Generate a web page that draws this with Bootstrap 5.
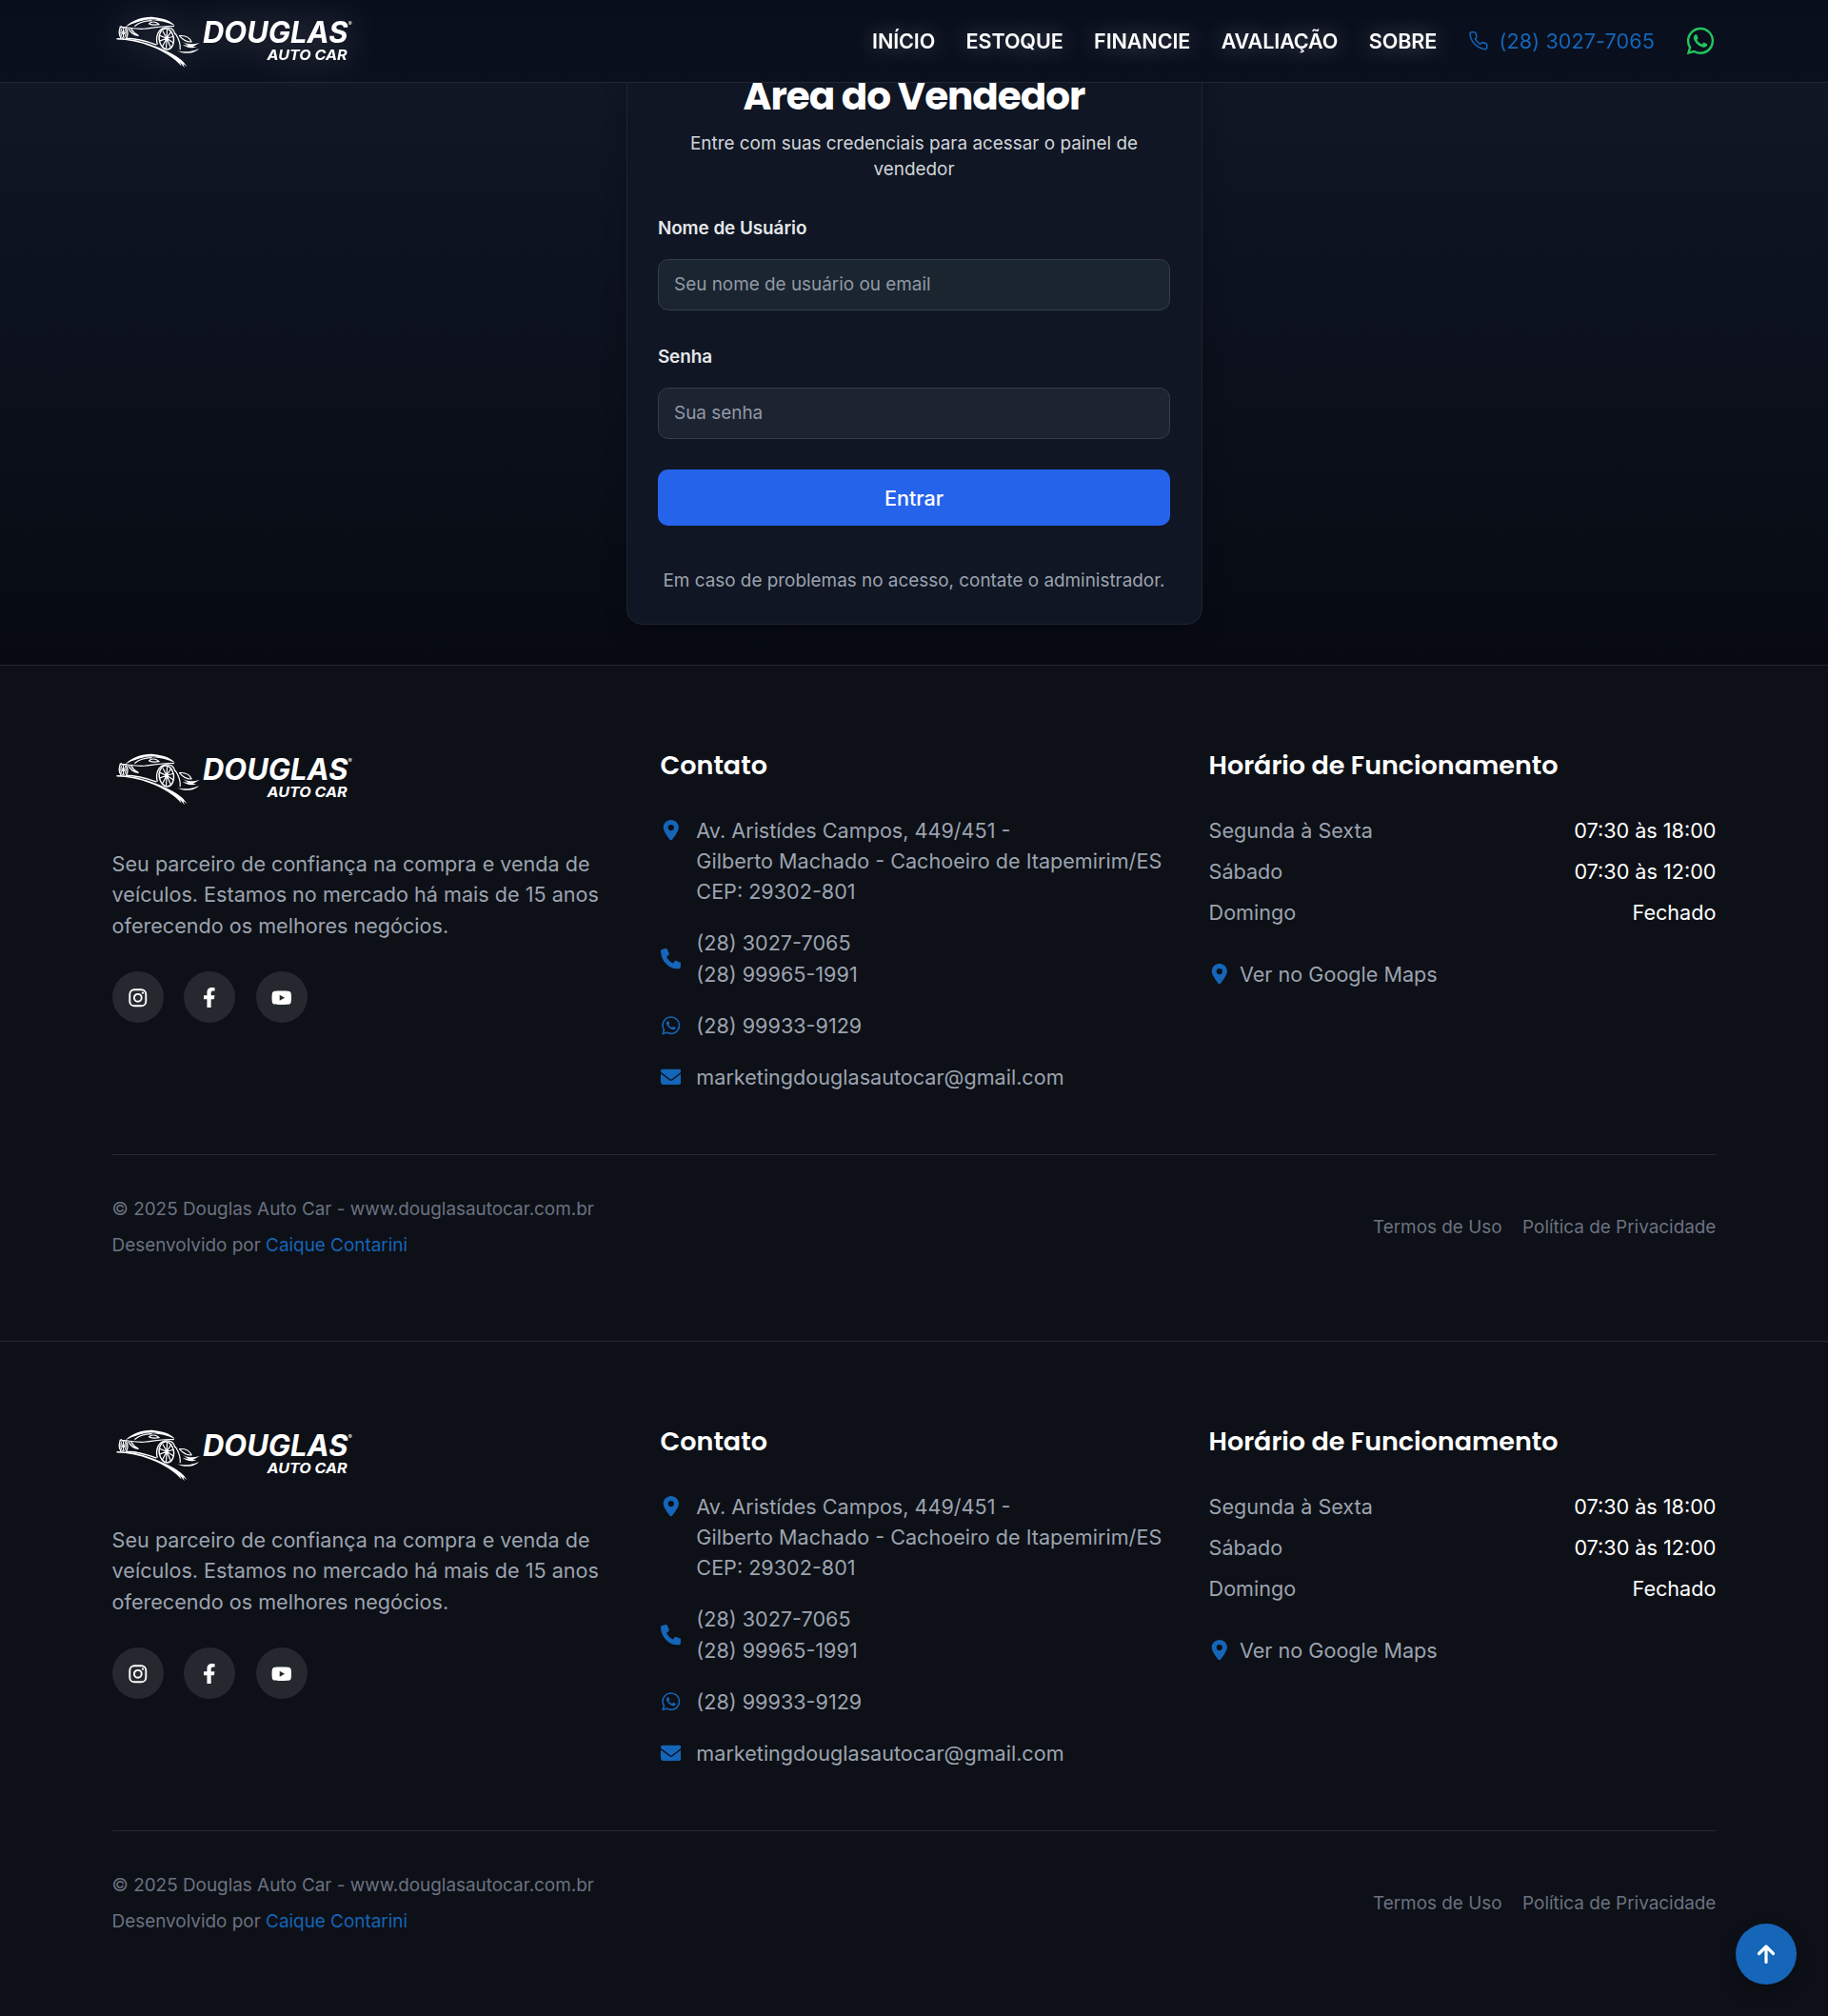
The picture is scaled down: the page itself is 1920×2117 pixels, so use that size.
<!DOCTYPE html>
<html lang="pt-BR">
<head>
<meta charset="utf-8">
<meta name="viewport" content="width=device-width, initial-scale=1">
<title>Douglas Auto Car - Área do Vendedor</title>
<link href="https://cdn.jsdelivr.net/npm/bootstrap@5.3.0/dist/css/bootstrap.min.css" rel="stylesheet">
<style>
html{font-size:21.6px}
body{font-family:Inter,sans-serif;background:#0d1017;color:#fff;line-height:1.5;overflow-x:hidden}
a{text-decoration:none}
svg{display:block;flex:none}
.wrap{width:78rem;margin:0 auto}
.topbar{height:87px;background:linear-gradient(180deg,#080e1c,#0a101d);border-bottom:1px solid #202632;z-index:10}
.logo-svg{width:12.25rem;height:3rem;overflow:visible}
.logo-svg text{fill:#fff;font-family:Inter,sans-serif;font-style:italic;font-weight:700}
.logo-glow{filter:drop-shadow(0 0 .9rem rgba(255,255,255,.25))}
.menu{gap:1.5rem}
.menu a{color:#fff;font-weight:600;letter-spacing:-.0055em;text-shadow:0 0 1.2rem rgba(255,255,255,.4)}
.menu .tel{color:#1565b8;font-weight:400;letter-spacing:.004em;text-shadow:none;gap:.53rem}
.menu .zap{color:#22c55e}
.ic{width:1rem;height:1rem}
.hero{margin-top:87px;height:611px;padding-bottom:42px;background:linear-gradient(180deg,#101725 0,#0d1321 25%,#0b101b 55%,#070a11 100%)}
.login{width:605px;background:#101623;border:1px solid #1a2533;border-radius:.75rem;padding:1.5rem;box-shadow:0 .3rem 1.2rem rgba(0,0,0,.2)}
.login h1{font-family:Poppins,Inter,sans-serif;font-weight:700;font-size:1.875rem;line-height:2.25rem;letter-spacing:-.025em}
.sub{font-size:.875rem;line-height:1.25rem;color:#d1d5db}
.login label{font-size:.875rem;line-height:1.25rem;font-weight:600;letter-spacing:-.003em;color:#e5e7eb;margin:1.65rem 0 .85rem}
.login .form-control{height:2.5rem;background:#1c2432;border:1px solid #343e4b;border-radius:.5rem;font-size:.875rem;padding:0 .75rem}
.login .form-control.user{background:#1a2530}
.login .form-control::placeholder{color:#9299a6}
.enter{height:2.75rem;background:#2563eb;border-radius:.5rem;color:#fff;font-weight:500}
.help{margin-top:2rem;color:#9ca3af}
.foot{border-top:1px solid #24282f;height:710px;padding-top:4rem}
.cols{display:grid;grid-template-columns:repeat(3,1fr);gap:2rem;height:19.75rem}
.foot h2{font-family:Poppins,Inter,sans-serif;font-weight:600;font-size:1.25rem;line-height:1.75rem;margin-bottom:1.5rem}
.foot .logo-svg{margin-bottom:1.88rem}
.tx{color:#9ca3af}
.item{gap:.75rem}
.soc{width:2.5rem;height:2.5rem;border-radius:50%;background:#25282e}
.blue{color:#1565b8}
.legal{border-top:1px solid #24282f;padding-top:2rem;font-size:.875rem;line-height:1.25rem;color:#6b7280}
.totop{position:fixed;right:33px;bottom:33px;width:64px;height:64px;border-radius:50%;background:#1565b8;box-shadow:0 .4rem .8rem rgba(0,0,0,.25)}
</style>
<script src="https://cdn.jsdelivr.net/npm/bootstrap@5.3.0/dist/js/bootstrap.bundle.min.js"></script>
</head>
<body>
<svg width="0" height="0" class="position-absolute">
<symbol id="car" viewBox="0 0 264.600 64.800" overflow="visible">
  <g transform="translate(-7.500 -5.400) scale(.3333)" fill="none" stroke="#fff" stroke-linecap="round" stroke-linejoin="round">
    <path fill="#fff" stroke="none" d="M64 68C85 46 120 35 152 37C185 40 208 50 220 64C195 53 172 48 146 47C112 47 90 55 64 68z"/>
    <path fill="#101623" stroke="none" d="M86 62C108 47 135 42 165 46C140 48 112 52 95 65z"/>
    <path stroke-width="3.500" d="M94 65C106 54 122 49 146 48M138 58C144 50 160 50 170 60C160 62 148 62 138 58M46 68C70 68 92 76 122 74C150 72 172 64 216 66"/>
    <path stroke-width="4" d="M74 74C78 84 90 94 104 95C92 88 86 82 82 74M164 122C158 96 168 74 190 70C208 68 217 78 220 90"/>
    <path stroke-width="4" d="M66 104C90 104 128 112 160 124M66 70C72 82 72 94 66 104M50 66C42 76 42 92 50 104"/>
    <ellipse cx="57" cy="86" rx="8" ry="17" stroke-width="3" stroke-dasharray="3 2"/>
    <path stroke-width="3" d="M57 72v28M50 78l14 16M64 78L50 94M49 86h16"/>
    <ellipse cx="193" cy="106" rx="23" ry="33" transform="rotate(-8 193 106)" stroke-width="4.500"/>
    <path stroke-width="3.600" d="M195 78L194 104L208 82M194 104L215 98M194 104L215 118M194 104L206 132M194 104L192 137M194 104L180 130M194 104L173 112M194 104L174 96M194 104L182 82"/>
    <path stroke-width="3.500" d="M222 90C232 106 238 122 236 138M234 96C252 94 266 102 272 115C258 116 244 108 234 96"/>
    <path fill="#fff" stroke="none" d="M36 103C94 104 142 120 190 142C224 158 248 174 258 194L246 184L250 197L236 180L240 192C218 166 184 145 142 129C108 116 74 109 36 108zM240 112C256 124 274 124 298 118C288 124 280 127 276 130L288 130C270 138 256 132 244 124L262 127zM226 142C250 150 272 146 296 136C284 150 252 158 226 142z"/>
  </g>
</symbol>
<symbol id="pin" viewBox="0 0 384 512"><path fill="currentColor" fill-rule="evenodd" d="M215.700 499.200C267 435 384 279.400 384 192C384 86 298 0 192 0S0 86 0 192c0 87.400 117 243 168.300 307.200c12.300 15.300 35.100 15.300 47.400 0zM192 118a74 74 0 1 1 0 148 74 74 0 1 1 0-148z"/></symbol>
<symbol id="phone" viewBox="0 0 512 512"><path fill="currentColor" d="M164.900 24.600c-7.700-18.600-28-28.500-47.400-23.200l-88 24C12.100 30.200 0 46 0 64C0 311.400 200.600 512 448 512c18 0 33.800-12.100 38.600-29.500l24-88c5.300-19.400-4.600-39.700-23.200-47.400l-96-40c-16.300-6.800-35.200-2.100-46.300 11.600L304.700 368C234.300 334.700 177.300 277.700 144 207.300L193.300 167c13.700-11.200 18.400-30 11.600-46.300l-40-96z"/></symbol>
<symbol id="mail" viewBox="0 0 512 512"><path fill="currentColor" d="M48 64C21.500 64 0 85.500 0 112c0 15.100 7.100 29.300 19.200 38.400L236.800 313.600c11.400 8.500 27 8.500 38.400 0L492.800 150.400c12.100-9.100 19.200-23.300 19.200-38.400c0-26.500-21.500-48-48-48H48zM0 176V384c0 35.300 28.700 64 64 64H448c35.300 0 64-28.700 64-64V176L294.400 339.200c-22.800 17.100-54 17.100-76.800 0L0 176z"/></symbol>
<symbol id="tel" viewBox="0 0 24 24"><path fill="none" stroke="currentColor" stroke-width="1.700" stroke-linecap="round" stroke-linejoin="round" d="M22 16.920v3a2 2 0 0 1-2.180 2 19.790 19.790 0 0 1-8.630-3.070 19.500 19.500 0 0 1-6-6 19.790 19.790 0 0 1-3.070-8.670A2 2 0 0 1 4.110 2h3a2 2 0 0 1 2 1.720 12.840 12.840 0 0 0 .7 2.810 2 2 0 0 1-.45 2.110L8.090 9.910a16 16 0 0 0 6 6l1.270-1.270a2 2 0 0 1 2.110-.45 12.840 12.840 0 0 0 2.810.7A2 2 0 0 1 22 16.920z"/></symbol>
<symbol id="wa" viewBox="-1 -1 18 18"><path fill="currentColor" d="M13.601 2.326A7.850 7.850 0 0 0 7.994 0C3.627 0 .068 3.558.064 7.926c0 1.399.366 2.760 1.057 3.965L0 16l4.204-1.102a7.900 7.900 0 0 0 3.790.965h.004c4.368 0 7.926-3.558 7.930-7.930A7.900 7.900 0 0 0 13.600 2.326zM7.994 14.521a6.600 6.600 0 0 1-3.356-.92l-.24-.144-2.494.654.666-2.433-.156-.251a6.560 6.560 0 0 1-1.007-3.505c0-3.626 2.957-6.584 6.591-6.584a6.560 6.560 0 0 1 4.660 1.931 6.560 6.560 0 0 1 1.928 4.660c-.004 3.639-2.961 6.592-6.592 6.592m3.615-4.934c-.197-.099-1.170-.578-1.353-.646-.182-.065-.315-.099-.445.099-.133.197-.513.646-.627.775-.114.133-.232.148-.43.050-.197-.1-.836-.308-1.592-.985-.59-.525-.985-1.175-1.103-1.372-.114-.198-.011-.304.088-.403.087-.088.197-.232.296-.346.100-.114.133-.198.198-.33.065-.134.034-.248-.015-.347-.05-.099-.445-1.076-.612-1.470-.16-.389-.323-.335-.445-.34-.114-.007-.247-.007-.38-.007a.730.730 0 0 0-.529.247c-.182.198-.691.677-.691 1.654s.710 1.916.810 2.049c.098.133 1.394 2.132 3.383 2.992.470.205.840.326 1.129.418.475.152.904.129 1.246.080.380-.058 1.171-.48 1.338-.943.164-.464.164-.86.114-.943-.049-.084-.182-.133-.38-.232"/></symbol>
<symbol id="ig" viewBox="0 0 16 16"><g fill="none" stroke="currentColor" stroke-width="1.400"><rect x="1.700" y="1.700" width="12.600" height="12.600" rx="3.600"/><circle cx="8" cy="8" r="2.900"/></g><circle cx="11.800" cy="4.200" r=".85" fill="currentColor"/></symbol>
<symbol id="fb" viewBox="0 0 320 512"><path fill="currentColor" d="M279.140 288l14.220-92.660h-88.910v-60.130c0-25.350 12.420-50.060 52.240-50.060h40.420V6.260S260.430 0 225.360 0c-73.220 0-121.080 44.380-121.080 124.720v70.620H22.890V288h81.390v224h100.170V288z"/></symbol>
<symbol id="yt" viewBox="0 0 576 512"><path fill="currentColor" d="M549.655 124.083c-6.281-23.650-24.787-42.276-48.284-48.597C458.781 64 288 64 288 64S117.220 64 74.629 75.486c-23.497 6.322-42.003 24.947-48.284 48.597-11.412 42.867-11.412 132.305-11.412 132.305s0 89.438 11.412 132.305c6.281 23.650 24.787 41.500 48.284 47.821C117.220 448 288 448 288 448s170.780 0 213.371-11.486c23.497-6.321 42.003-24.171 48.284-47.821 11.412-42.867 11.412-132.305 11.412-132.305s0-89.438-11.412-132.305zm-317.510 213.508V175.185l142.739 81.205-142.739 81.201z"/></symbol>
</svg>
<header class="topbar position-fixed top-0 start-0 end-0">
  <div class="wrap h-100 d-flex align-items-center justify-content-between">
    <a href="#"><svg class="logo-svg logo-glow" viewBox="0 0 264.600 64.800"><use href="#car"/><text x="95" y="34.500" font-size="31" textLength="152.500" lengthAdjust="spacingAndGlyphs">DOUGLAS</text><text x="162.500" y="52" font-size="15" textLength="84" lengthAdjust="spacingAndGlyphs">AUTO CAR</text><text x="247.500" y="16" font-size="6">®</text></svg></a>
    <nav class="menu d-flex align-items-center">
      <a href="#">INÍCIO</a><a href="#">ESTOQUE</a><a href="#">FINANCIE</a><a href="#">AVALIAÇÃO</a><a href="#">SOBRE</a>
      <a href="#" class="tel d-flex align-items-center"><svg class="ic"><use href="#tel"/></svg>(28) 3027-7065</a>
      <a href="#" class="zap"><svg width="32" height="32"><use href="#wa"/></svg></a>
    </nav>
  </div>
</header>
<main class="hero d-flex justify-content-center align-items-end">
  <form class="login">
    <h1 class="text-center mb-2">Área do Vendedor</h1>
    <p class="sub text-center mb-0 px-3">Entre com suas credenciais para acessar o painel de vendedor</p>
    <label class="d-block" for="u">Nome de Usuário</label>
    <input id="u" class="form-control user" placeholder="Seu nome de usuário ou email">
    <label class="d-block" for="p">Senha</label>
    <input id="p" type="password" class="form-control" placeholder="Sua senha">
    <button type="button" class="btn enter w-100 mt-4 border-0">Entrar</button>
    <p class="sub help text-center mb-0">Em caso de problemas no acesso, contate o administrador.</p>
  </form>
</main>
<div id="footers"></div>
<template id="footer-tpl">
<footer class="foot">
  <div class="wrap">
    <div class="cols">
      <div>
        <svg class="logo-svg" viewBox="0 0 264.600 64.800"><use href="#car"/><text x="95" y="34.500" font-size="31" textLength="152.500" lengthAdjust="spacingAndGlyphs">DOUGLAS</text><text x="162.500" y="52" font-size="15" textLength="84" lengthAdjust="spacingAndGlyphs">AUTO CAR</text><text x="247.500" y="16" font-size="6">®</text></svg>
        <p class="tx mb-4">Seu parceiro de confiança na compra e venda de veículos. Estamos no mercado há mais de 15 anos oferecendo os melhores negócios.</p>
        <div class="d-flex gap-3">
          <a href="#" class="soc d-flex align-items-center justify-content-center text-white"><svg class="ic"><use href="#ig"/></svg></a>
          <a href="#" class="soc d-flex align-items-center justify-content-center text-white"><svg class="ic"><use href="#fb"/></svg></a>
          <a href="#" class="soc d-flex align-items-center justify-content-center text-white"><svg class="ic"><use href="#yt"/></svg></a>
        </div>
      </div>
      <div>
        <h2>Contato</h2>
        <div class="d-flex flex-column gap-3 tx">
          <div class="d-flex item"><svg class="ic blue mt-1"><use href="#pin"/></svg><span class="text-nowrap">Av. Aristídes Campos, 449/451 -<br>Gilberto Machado - Cachoeiro de Itapemirim/ES<br>CEP: 29302-801</span></div>
          <div class="d-flex item align-items-center"><svg class="ic blue"><use href="#phone"/></svg><span>(28) 3027-7065<br>(28) 99965-1991</span></div>
          <div class="d-flex item align-items-center"><svg class="ic blue"><use href="#wa"/></svg><span>(28) 99933-9129</span></div>
          <div class="d-flex item align-items-center"><svg class="ic blue"><use href="#mail"/></svg><span>marketingdouglasautocar@gmail.com</span></div>
        </div>
      </div>
      <div>
        <h2>Horário de Funcionamento</h2>
        <div class="d-flex flex-column gap-2 tx">
          <div class="d-flex justify-content-between"><span>Segunda à Sexta</span><span class="text-white">07:30 às 18:00</span></div>
          <div class="d-flex justify-content-between"><span>Sábado</span><span class="text-white">07:30 às 12:00</span></div>
          <div class="d-flex justify-content-between"><span>Domingo</span><span class="text-white">Fechado</span></div>
        </div>
        <a href="#" class="tx d-flex align-items-center gap-2 mt-4"><svg class="ic blue"><use href="#pin"/></svg>Ver no Google Maps</a>
      </div>
    </div>
    <div class="legal d-flex justify-content-between align-items-center">
      <div><div class="mb-2">© 2025 Douglas Auto Car - www.douglasautocar.com.br</div><div>Desenvolvido por <a href="#" class="blue">Caique Contarini</a></div></div>
      <div class="d-flex gap-3"><span>Termos de Uso</span><span>Política de Privacidade</span></div>
    </div>
  </div>
</footer>
</template>
<a href="#" class="totop d-flex align-items-center justify-content-center"><svg width="22" height="22" viewBox="0 0 22 22"><path d="M11 19.500V3.500M3.500 10.500L11 3l7.500 7.500" fill="none" stroke="#fff" stroke-width="3.200" stroke-linecap="round" stroke-linejoin="round"/></svg></a>
<script>
const tpl=document.getElementById('footer-tpl'),slot=document.getElementById('footers');
for(let i=0;i<2;i++)slot.appendChild(tpl.content.cloneNode(true));
</script>
</body>
</html>
